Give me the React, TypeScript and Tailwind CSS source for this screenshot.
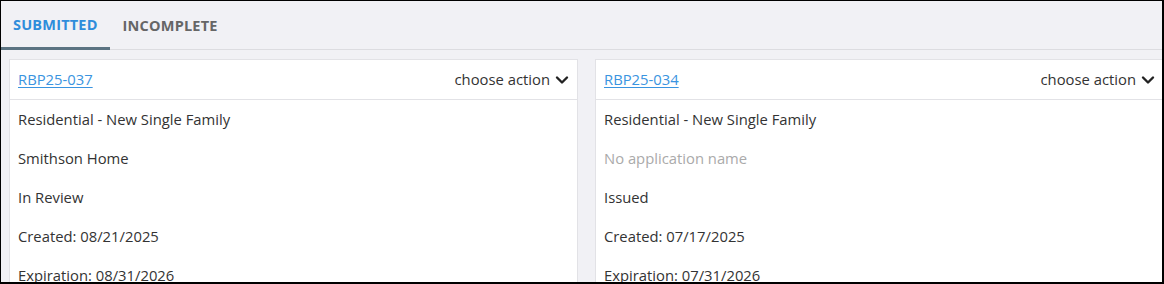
import React from 'react';

interface Permit {
  id: string;
  type: string;
  name: string | null;
  status: string;
  created: string;
  expiration: string;
}

const permits: Permit[] = [
  {
    id: 'RBP25-037',
    type: 'Residential - New Single Family',
    name: 'Smithson Home',
    status: 'In Review',
    created: '08/21/2025',
    expiration: '08/31/2026',
  },
  {
    id: 'RBP25-034',
    type: 'Residential - New Single Family',
    name: null,
    status: 'Issued',
    created: '07/17/2025',
    expiration: '07/31/2026',
  },
];

const Chevron = () => (
  <svg width="14" height="10" viewBox="0 0 14 10" className="ml-[5px] mt-[1px]">
    <path d="M2 2.5 L7 7.5 L12 2.5" fill="none" stroke="#222" strokeWidth="2.4" strokeLinecap="round" strokeLinejoin="round" />
  </svg>
);

const PermitCard: React.FC<{ permit: Permit }> = ({ permit }) => (
  <div className="bg-white border border-[#e2e2e6] w-[569px] shrink-0">
    <div className="h-[40px] flex items-center justify-between pl-[8px] pr-[8px] border-b border-[#e2e2e6]">
      <a href="#" className="text-[#3a94e0] underline underline-offset-2 decoration-1">
        {permit.id}
      </a>
      <div className="flex items-center text-[#333]">
        choose action
        <Chevron />
      </div>
    </div>
    <div className="pl-[8px]">
      <div className="h-[39px] flex items-center">{permit.type}</div>
      <div className={`h-[39px] flex items-center ${permit.name ? '' : 'text-[#aaaaaa]'}`}>
        {permit.name ?? 'No application name'}
      </div>
      <div className="h-[39px] flex items-center">{permit.status}</div>
      <div className="h-[39px] flex items-center">Created: {permit.created}</div>
      <div className="h-[39px] flex items-center">Expiration: {permit.expiration}</div>
    </div>
  </div>
);

const App: React.FC = () => {
  return (
    <div
      className="w-[1164px] h-[284px] overflow-hidden bg-[#f1f1f5] border-t border-l border-r-2 border-b-2 border-black text-[14.8px] text-[#333]"
      style={{ fontFamily: '"Open Sans", "Noto Sans", sans-serif' }}
    >
      {/* tabs */}
      <div className="flex h-[49px] border-b border-[#dcdce0]">
        <div className="px-[12px] flex items-center font-bold text-[14.5px] text-[#2f8ddb] tracking-[0.2px] border-b-[3px] border-[#5b7382] mb-[-1px] pt-[1px]">
          SUBMITTED
        </div>
        <div className="px-[13px] flex items-center font-bold text-[14.5px] text-[#666] tracking-[0.2px] pt-[1px]">
          INCOMPLETE
        </div>
      </div>

      {/* cards */}
      <div className="flex gap-[17px] pl-[8px] pt-[9px]">
        {permits.map(p => (
          <PermitCard key={p.id} permit={p} />
        ))}
      </div>
    </div>
  );
};

export default App;
